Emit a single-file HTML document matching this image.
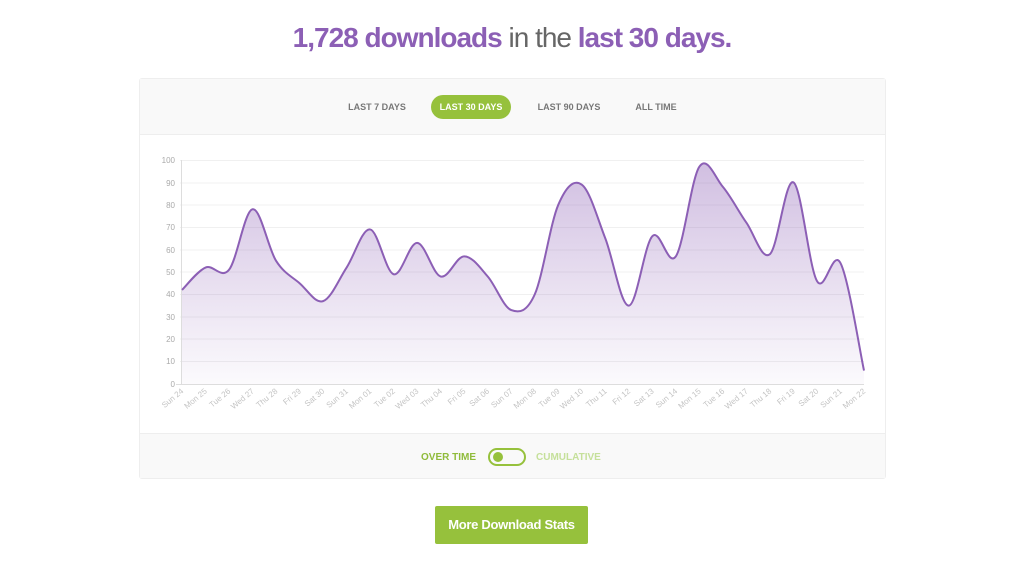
<!DOCTYPE html>
<html><head><meta charset="utf-8"><style>
body{margin:0;width:1024px;height:565px;background:#fff;font-family:"Liberation Sans",sans-serif;position:relative;overflow:hidden}
h1{position:absolute;top:22px;left:0;width:1024px;text-align:center;margin:0;font-size:28px;letter-spacing:-1px;font-weight:normal;color:#666}
h1 b{color:#8c5fb5}
.card{position:absolute;left:139px;top:78px;width:745px;height:399px;border:1px solid #eee;border-radius:3px;background:#fff}
.hd{position:absolute;left:0;top:0;right:0;height:55px;background:#f9f9f9;border-bottom:1px solid #eee}
.tab{position:absolute;top:16px;height:24px;line-height:24px;font-size:9px;font-weight:bold;color:#777;text-align:center}
.on{background:#96c13c;color:#fff;border-radius:13px}
.ft{position:absolute;left:0;bottom:0;right:0;height:44px;background:#f9f9f9;border-top:1px solid #eee}
.btn{position:absolute;left:435px;top:506px;width:153px;height:38px;background:#96c13c;border-radius:2px;color:#fff;font-weight:bold;font-size:13px;line-height:38px;text-align:center;letter-spacing:-.3px}
</style></head><body>
<h1><b>1,728 downloads</b> in the <b>last 30 days.</b></h1>
<div class="card">
<div class="hd">
<div class="tab" style="left:200px;width:74px">LAST 7 DAYS</div>
<div class="tab on" style="left:291px;width:80px">LAST 30 DAYS</div>
<div class="tab" style="left:390px;width:78px">LAST 90 DAYS</div>
<div class="tab" style="left:488px;width:56px">ALL TIME</div>
</div>
<div class="ft">
<span style="position:absolute;left:281px;top:18px;font-size:10px;font-weight:bold;color:#8fbb3a">OVER TIME</span>
<span style="position:absolute;left:348px;top:14px;width:34px;height:14px;border:2px solid #96c13c;border-radius:9px"></span>
<span style="position:absolute;left:353px;top:18px;width:10px;height:10px;background:#96c13c;border-radius:50%"></span>
<span style="position:absolute;left:396px;top:18px;font-size:10px;font-weight:bold;color:#c5e09a">CUMULATIVE</span>
</div>
</div>
<svg style="position:absolute;left:0;top:0" width="1024" height="565">
<defs><linearGradient id="g" x1="0" y1="0" x2="0" y2="1"><stop offset="0" stop-color="#8c5fb5" stop-opacity=".4"/><stop offset="1" stop-color="#8c5fb5" stop-opacity=".03"/></linearGradient></defs>
<g stroke="#f0f0f0" stroke-width="1">
<line x1="180" x2="864" y1="160.5" y2="160.5"/><line x1="180" x2="864" y1="183" y2="183"/><line x1="180" x2="864" y1="205" y2="205"/><line x1="180" x2="864" y1="227.5" y2="227.5"/><line x1="180" x2="864" y1="250" y2="250"/><line x1="180" x2="864" y1="272" y2="272"/><line x1="180" x2="864" y1="294.5" y2="294.5"/><line x1="180" x2="864" y1="317" y2="317"/><line x1="180" x2="864" y1="339" y2="339"/><line x1="180" x2="864" y1="361.5" y2="361.5"/>
</g>
<line x1="181.5" x2="181.5" y1="160" y2="384" stroke="#ddd"/><line x1="176" x2="864" y1="384.5" y2="384.5" stroke="#ddd"/>
<g font-size="8" fill="#aaa" text-anchor="end" font-family="Liberation Sans,sans-serif">
<text x="175" y="163">100</text><text x="175" y="186">90</text><text x="175" y="208">80</text><text x="175" y="230">70</text><text x="175" y="253">60</text><text x="175" y="275">50</text><text x="175" y="297">40</text><text x="175" y="320">30</text><text x="175" y="342">20</text><text x="175" y="364">10</text><text x="175" y="387">0</text>
</g>
<path id="area" fill="url(#g)"/><path id="ln" fill="none" stroke="#8c5fb5" stroke-width="2"/>
<g font-size="8" fill="#c4c4c4" text-anchor="end" font-family="Liberation Sans,sans-serif">
<text transform="translate(184,392) rotate(-40)">Sun 24</text><text transform="translate(207.5,392) rotate(-40)">Mon 25</text><text transform="translate(231,392) rotate(-40)">Tue 26</text><text transform="translate(254.6,392) rotate(-40)">Wed 27</text><text transform="translate(278.1,392) rotate(-40)">Thu 28</text><text transform="translate(301.6,392) rotate(-40)">Fri 29</text><text transform="translate(325.1,392) rotate(-40)">Sat 30</text><text transform="translate(348.6,392) rotate(-40)">Sun 31</text><text transform="translate(372.2,392) rotate(-40)">Mon 01</text><text transform="translate(395.7,392) rotate(-40)">Tue 02</text><text transform="translate(419.2,392) rotate(-40)">Wed 03</text><text transform="translate(442.7,392) rotate(-40)">Thu 04</text><text transform="translate(466.2,392) rotate(-40)">Fri 05</text><text transform="translate(489.8,392) rotate(-40)">Sat 06</text><text transform="translate(513.3,392) rotate(-40)">Sun 07</text><text transform="translate(536.8,392) rotate(-40)">Mon 08</text><text transform="translate(560.3,392) rotate(-40)">Tue 09</text><text transform="translate(583.8,392) rotate(-40)">Wed 10</text><text transform="translate(607.4,392) rotate(-40)">Thu 11</text><text transform="translate(630.9,392) rotate(-40)">Fri 12</text><text transform="translate(654.4,392) rotate(-40)">Sat 13</text><text transform="translate(677.9,392) rotate(-40)">Sun 14</text><text transform="translate(701.4,392) rotate(-40)">Mon 15</text><text transform="translate(725,392) rotate(-40)">Tue 16</text><text transform="translate(748.5,392) rotate(-40)">Wed 17</text><text transform="translate(772,392) rotate(-40)">Thu 18</text><text transform="translate(795.5,392) rotate(-40)">Fri 19</text><text transform="translate(819,392) rotate(-40)">Sat 20</text><text transform="translate(842.6,392) rotate(-40)">Sun 21</text><text transform="translate(866,392) rotate(-40)">Mon 22</text>
</g>
</svg>
<div class="btn">More Download Stats</div>
<script>
var v=[42,52,51,78,55,45,37,52,69,49,63,48,57,48,33,40,80,89,65,35,66,57,97,88,72,58,90,46,54,6];
var p=v.map(function(a,i){return[182+i*682/29,384-a*2.24]});
var d="M"+p[0][0]+","+p[0][1];
for(var i=0;i<p.length-1;i++){var p0=p[i-1]||p[i],p1=p[i],p2=p[i+1],p3=p[i+2]||p2,t=0.17;
d+=" C"+(p1[0]+(p2[0]-p0[0])*t)+","+(p1[1]+(p2[1]-p0[1])*t)+" "+(p2[0]-(p3[0]-p1[0])*t)+","+(p2[1]-(p3[1]-p1[1])*t)+" "+p2[0]+","+p2[1];}
document.getElementById("ln").setAttribute("d",d);
document.getElementById("area").setAttribute("d",d+" L864,384 L182,384 Z");
</script>
</body></html>
